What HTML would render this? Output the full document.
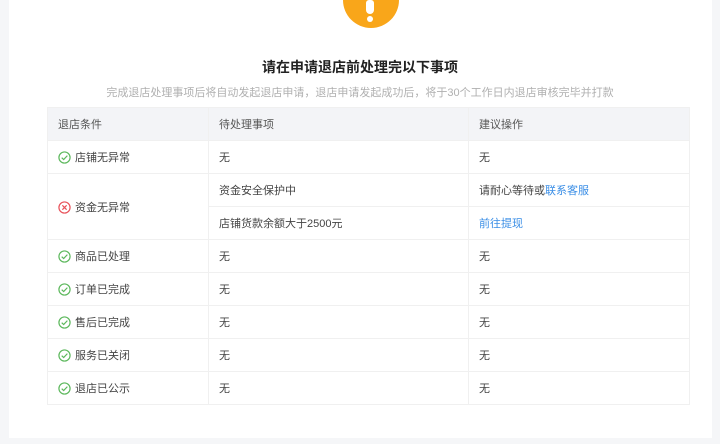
<!DOCTYPE html>
<html><head><meta charset="utf-8"><style>
*{margin:0;padding:0;box-sizing:border-box}
body{width:720px;height:444px;background:#f5f6f8;font-family:"Liberation Sans","Noto Sans CJK SC",sans-serif;overflow:hidden;position:relative}
.panel{position:absolute;left:9px;top:0;width:703px;height:438px;background:#fff}
.circ{position:absolute;left:343px;top:-28px;width:56px;height:56px;border-radius:50%;background:#f9a61a}
.ex{position:absolute;left:366px;top:0;width:8px;height:14px;background:#fff;border-radius:3px 3px 4px 4px}
.dot{position:absolute;left:367px;top:16px;width:6px;height:6px;background:#fff;border-radius:50%}
h1{position:absolute;left:0;width:720px;top:57px;text-align:center;font-size:14px;font-weight:bold;color:#222}
.sub{position:absolute;left:0;width:720px;top:84px;text-align:center;font-size:11px;color:#b0b0b0}
table{position:absolute;left:47px;top:107px;width:643px;border-collapse:collapse;font-size:11px;color:#444}
td,th{border:1px solid #f0f0f0;padding:0 10px;text-align:left;font-weight:normal;vertical-align:middle}
th{background:#f3f4f7;height:33px;color:#555}
td{height:33px}
.c1{width:161px}.c2{width:260px}
a{color:#3a8ee6;text-decoration:none}
.i{display:inline-block;vertical-align:-3px;margin-right:4px}
</style></head><body>
<div class="panel"></div>
<div class="circ"></div><div class="ex"></div><div class="dot"></div>
<h1>请在申请退店前处理完以下事项</h1>
<div class="sub">完成退店处理事项后将自动发起退店申请，退店申请发起成功后，将于30个工作日内退店审核完毕并打款</div>
<table>
<tr><th class="c1">退店条件</th><th class="c2">待处理事项</th><th>建议操作</th></tr>
<tr><td><svg class="i" width="13" height="13" viewBox="0 0 14 14"><circle cx="7" cy="7" r="6" fill="none" stroke="#5cb85c" stroke-width="1.3"/><path d="M4 7.2l2.1 2 4-4.2" fill="none" stroke="#5cb85c" stroke-width="1.3"/></svg>店铺无异常</td><td>无</td><td>无</td></tr>
<tr><td rowspan="2"><svg class="i" width="13" height="13" viewBox="0 0 14 14"><circle cx="7" cy="7" r="6" fill="none" stroke="#e8525a" stroke-width="1.3"/><path d="M4.7 4.7l4.6 4.6M9.3 4.7l-4.6 4.6" stroke="#e8525a" stroke-width="1.3"/></svg>资金无异常</td><td>资金安全保护中</td><td>请耐心等待或<a>联系客服</a></td></tr>
<tr><td>店铺货款余额大于2500元</td><td><a>前往提现</a></td></tr>
<tr><td><svg class="i" width="13" height="13" viewBox="0 0 14 14"><circle cx="7" cy="7" r="6" fill="none" stroke="#5cb85c" stroke-width="1.3"/><path d="M4 7.2l2.1 2 4-4.2" fill="none" stroke="#5cb85c" stroke-width="1.3"/></svg>商品已处理</td><td>无</td><td>无</td></tr>
<tr><td><svg class="i" width="13" height="13" viewBox="0 0 14 14"><circle cx="7" cy="7" r="6" fill="none" stroke="#5cb85c" stroke-width="1.3"/><path d="M4 7.2l2.1 2 4-4.2" fill="none" stroke="#5cb85c" stroke-width="1.3"/></svg>订单已完成</td><td>无</td><td>无</td></tr>
<tr><td><svg class="i" width="13" height="13" viewBox="0 0 14 14"><circle cx="7" cy="7" r="6" fill="none" stroke="#5cb85c" stroke-width="1.3"/><path d="M4 7.2l2.1 2 4-4.2" fill="none" stroke="#5cb85c" stroke-width="1.3"/></svg>售后已完成</td><td>无</td><td>无</td></tr>
<tr><td><svg class="i" width="13" height="13" viewBox="0 0 14 14"><circle cx="7" cy="7" r="6" fill="none" stroke="#5cb85c" stroke-width="1.3"/><path d="M4 7.2l2.1 2 4-4.2" fill="none" stroke="#5cb85c" stroke-width="1.3"/></svg>服务已关闭</td><td>无</td><td>无</td></tr>
<tr><td><svg class="i" width="13" height="13" viewBox="0 0 14 14"><circle cx="7" cy="7" r="6" fill="none" stroke="#5cb85c" stroke-width="1.3"/><path d="M4 7.2l2.1 2 4-4.2" fill="none" stroke="#5cb85c" stroke-width="1.3"/></svg>退店已公示</td><td>无</td><td>无</td></tr>
</table>
</body></html>
